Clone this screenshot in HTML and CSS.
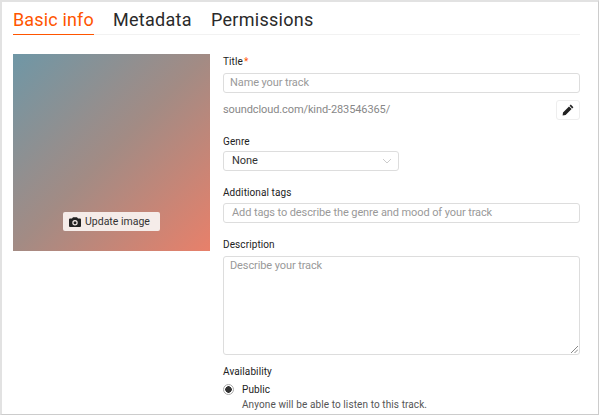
FILE: index.html
```html
<!DOCTYPE html>
<html>
<head>
    <meta charset="UTF-8">
    <title>Basic info</title>
    <link rel="stylesheet" href="styles.css">
</head>
<body>
<div class="frame">
    <ul class="tabs">
        <li class="current">Basic info</li>
        <li>Metadata</li>
        <li>Permissions</li>
    </ul>
    <div class="content">
        <div class="artwork">
            <div class="update">
                <svg class="camera" width="12" height="10" viewBox="0 0 12 10"><path fill-rule="evenodd" fill="#222" d="M1 1.500h2L4 .2h4l1 1.300h2a1 1 0 0 1 1 1V9a1 1 0 0 1-1 1H1a1 1 0 0 1-1-1V2.500a1 1 0 0 1 1-1zM6 3a2.700 2.700 0 1 0 0 5.400A2.700 2.700 0 0 0 6 3zm0 1.200a1.500 1.500 0 1 1 0 3 1.500 1.500 0 0 1 0-3z"/></svg>
                <span>Update image</span>
            </div>
        </div>
        <div class="fields">
            <div class="label title-label">Title<span class="star">*</span></div>
            <div class="input">Name your track</div>
            <div class="link-row">
                <span>soundcloud.com/kind-283546365/</span>
                <div class="edit">
                    <svg width="12" height="12" viewBox="0 0 12 12"><path fill="#222" d="M8.800.6l2.600 2.600-1.200 1.200-2.600-2.600zM7 2.400L9.600 5l-6 6L.6 11.400 1 8.400z"/></svg>
                </div>
            </div>
            <div class="label genre-label">Genre</div>
            <div class="select">
                <span>None</span>
                <svg width="10" height="6" viewBox="0 0 10 6"><path fill="none" stroke="#ccc" d="M1 1l4 4 4-4"/></svg>
            </div>
            <div class="label">Additional tags</div>
            <div class="input tags">Add tags to describe the genre and mood of your track</div>
            <div class="label desc-label">Description</div>
            <div class="textarea">
                Describe your track
                <svg class="grip" width="7" height="7" viewBox="0 0 7 7"><path fill="none" stroke="#888" d="M0 7l7-7M3.500 7l3.500-3.500"/></svg>
            </div>
            <div class="label avail">Availability</div>
            <div class="radio-row">
                <span class="radio"></span>
                <span class="radio-name">Public</span>
            </div>
            <div class="radio-desc">Anyone will be able to listen to this track.</div>
        </div>
    </div>
</div>
</body>
</html>
```

FILE: styles.css
```css
html,body,div,ul,li{
    margin: 0;
    padding: 0;
}
ul{
    list-style-type: none;
}
body{
    width: 600px;
    height: 415px;
    overflow: hidden;
    background-color: #fff;
    font: 11px/14px Roboto, sans-serif;
    letter-spacing: -0.1px;
    color: #333;
}
.frame{
    box-sizing: border-box;
    width: 599px;
    height: 415px;
    padding: 8px 0 0 11px;
    border-top: 2px solid #e2e2e2;
    border-left: 2px solid #e2e2e2;
    border-right: 1px solid #ccc;
    border-bottom: 1px solid #ccc;
    overflow: hidden;
}
.tabs{
    display: flex;
    gap: 19px;
    width: 567px;
    height: 24px;
    border-bottom: 1px solid #f2f2f2;
    font-size: 18px;
    line-height: 20px;
    letter-spacing: 0.3px;
    color: #2a2a2a;
}
.tabs li{
    height: 24px;
}
.tabs li.current{
    color: #f50;
    letter-spacing: 0.15px;
    border-bottom: 1px solid #f50;
}
.content{
    display: flex;
    gap: 13px;
    margin-top: 19px;
}
.artwork{
    display: flex;
    flex-direction: column;
    justify-content: flex-end;
    align-items: center;
    flex-shrink: 0;
    width: 197px;
    height: 197px;
    background: linear-gradient(135deg, #6f97a6 0%, #a38b84 50%, #e8806a 100%);
}
.update{
    display: flex;
    align-items: center;
    gap: 4px;
    box-sizing: border-box;
    width: 97px;
    height: 19px;
    margin-bottom: 20px;
    padding-left: 6px;
    border-radius: 2px;
    background-color: #f5ece9;
    font-size: 10.5px;
    letter-spacing: 0;
}
.fields{
    width: 357px;
    padding-top: 1px;
}
.label{
    margin-top: 15px;
    margin-bottom: 3px;
    font-size: 10px;
    letter-spacing: 0.1px;
    line-height: 14px;
    color: #222;
}
.title-label{
    margin-top: 0;
    margin-bottom: 4px;
}
.genre-label{
    margin-bottom: 2px;
}
.desc-label{
    margin-bottom: 4px;
}
.star{
    margin-left: 1px;
    color: #f50;
}
.input{
    box-sizing: border-box;
    height: 20px;
    padding-left: 6px;
    border: 1px solid #ddd;
    border-radius: 3px;
    line-height: 18px;
    color: #999;
}
.tags{
    padding-left: 8px;
}
.link-row{
    display: flex;
    justify-content: space-between;
    align-items: center;
    margin-top: 7px;
    color: #888;
}
.edit{
    display: flex;
    justify-content: center;
    align-items: center;
    box-sizing: border-box;
    width: 24px;
    height: 20px;
    border: 1px solid #eee;
    border-radius: 3px;
}
.select{
    display: flex;
    justify-content: space-between;
    align-items: center;
    box-sizing: border-box;
    width: 176px;
    height: 20px;
    padding: 0 6px 0 8px;
    border: 1px solid #ddd;
    border-radius: 3px;
    color: #333;
}
.textarea{
    position: relative;
    box-sizing: border-box;
    height: 99px;
    padding: 2px 6px;
    border: 1px solid #ddd;
    border-radius: 3px;
    color: #999;
}
.grip{
    position: absolute;
    right: 1px;
    bottom: 1px;
}
.avail{
    margin-top: 10px;
    margin-bottom: 0;
}
.radio-row{
    display: flex;
    align-items: center;
    gap: 8px;
    height: 15px;
    margin-top: 3px;
}
.radio{
    box-sizing: border-box;
    width: 11px;
    height: 11px;
    border: 1px solid #aaa;
    border-radius: 50%;
    background: radial-gradient(circle, #333 0, #333 3px, #fff 3.500px);
}
.radio-name{
    font-size: 10px;
    letter-spacing: 0.1px;
    color: #222;
}
.radio-desc{
    margin-top: 1px;
    margin-left: 19px;
    font-size: 10px;
    letter-spacing: 0.1px;
    color: #555;
}
```
